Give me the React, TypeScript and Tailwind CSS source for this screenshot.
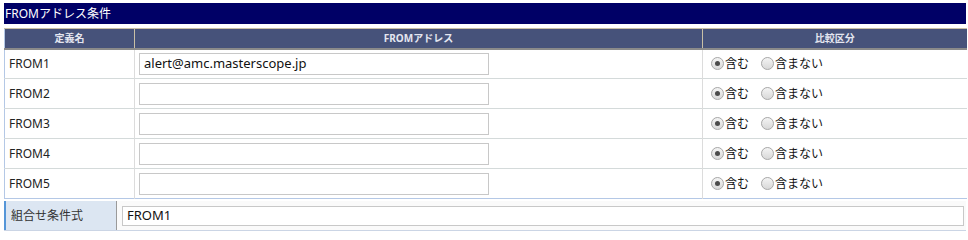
const font = { fontFamily: '"Noto Sans", "Noto Sans CJK JP", sans-serif' };

const rows = [
  { name: "FROM1", address: "alert@amc.masterscope.jp" },
  { name: "FROM2", address: "" },
  { name: "FROM3", address: "" },
  { name: "FROM4", address: "" },
  { name: "FROM5", address: "" },
];

const Radio = ({ checked }: { checked?: boolean }) => (
  <span className="flex h-[13px] w-[13px] items-center justify-center rounded-full border border-[#a8a8a8] bg-gradient-to-b from-[#f4f4f4] to-[#d8d8d8]">
    {checked && <span className="h-[5px] w-[5px] rounded-full bg-[#4a4a4a]" />}
  </span>
);

const App = () => {
  return (
    <div className="w-[968px] bg-white pl-[4px] pr-[2px] pt-[3px] text-[12px] text-[#222]" style={font}>
      {/* Section title */}
      <div className="h-[21px] bg-[#000066] pl-[1px] leading-[21px] text-white">FROMアドレス条件</div>

      {/* FROM table */}
      <table className="mt-[4px] w-[962px] table-fixed border-collapse border-l border-b border-[#b4c8e6]">
        <colgroup>
          <col className="w-[130px]" />
          <col className="w-[568px]" />
          <col className="w-[264px]" />
        </colgroup>
        <thead>
          <tr className="h-[20px] border-t border-b-2 border-t-[#c9c0a6] border-b-[#8a8a8a] bg-[#46527a] text-[10px] font-bold text-[#e4e6f0]">
            <th className="border-r border-[#c9c0a6] font-bold">定義名</th>
            <th className="border-r border-[#c9c0a6] font-bold">FROMアドレス</th>
            <th className="font-bold">比較区分</th>
          </tr>
        </thead>
        <tbody>
          {rows.map((row, i) => (
            <tr key={row.name} className={`h-[30px] ${i < rows.length - 1 ? "border-b border-[#d4dada]" : ""}`}>
              <td className="border-r border-[#dcdcdc] pl-[4px]">{row.name}</td>
              <td className="border-r border-[#dcdcdc] pl-[4px]">
                <div className="flex h-[22px] w-[350px] items-center border border-[#c8c8c8] bg-white pl-[4px] text-[13px] text-[#111]">
                  {row.address}
                </div>
              </td>
              <td className="pl-[8px]">
                <div className="flex items-center text-[12px] text-[#111]">
                  <Radio checked />
                  <span className="ml-[1px]">含む</span>
                  <span className="ml-[12px] flex items-center"><Radio /></span>
                  <span className="ml-[1px]">含まない</span>
                </div>
              </td>
            </tr>
          ))}
        </tbody>
      </table>

      {/* Combination expression */}
      <div className="mt-[2px] flex h-[30px] border-b border-[#cbd5e5] bg-[#fafafa]">
        <div className="flex w-[113px] items-center border-l-2 border-r border-l-[#5596d8] border-r-[#9a9a9a] bg-[#dce6f2] pl-[5px] text-[#333]">
          組合せ条件式
        </div>
        <div className="flex flex-1 items-center pl-[5px] pr-[2px]">
          <div className="flex h-[20px] w-full items-center border border-[#c8c8c8] bg-white pl-[4px] text-[13px] text-[#111]">
            FROM1
          </div>
        </div>
      </div>
    </div>
  );
};

export default App;
